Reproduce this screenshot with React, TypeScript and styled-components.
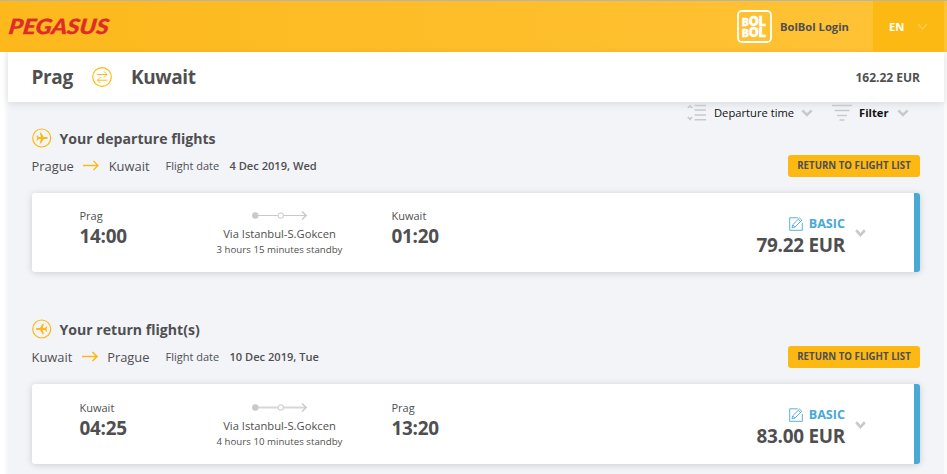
import { FC } from 'react'
import styled, { createGlobalStyle } from 'styled-components'

type Flight = {
  heading: string
  from: string
  to: string
  date: string
  depart: { city: string; time: string }
  arrive: { city: string; time: string }
  standby: string
  price: string
  isReturn?: boolean
}

const flights: Flight[] = [
  {
    heading: 'Your departure flights',
    from: 'Prague',
    to: 'Kuwait',
    date: '4 Dec 2019, Wed',
    depart: { city: 'Prag', time: '14:00' },
    arrive: { city: 'Kuwait', time: '01:20' },
    standby: '3 hours 15 minutes standby',
    price: '79.22 EUR',
  },
  {
    heading: 'Your return flight(s)',
    from: 'Kuwait',
    to: 'Prague',
    date: '10 Dec 2019, Tue',
    depart: { city: 'Kuwait', time: '04:25' },
    arrive: { city: 'Prag', time: '13:20' },
    standby: '4 hours 10 minutes standby',
    price: '83.00 EUR',
    isReturn: true,
  },
]

const Chevron: FC<{ size?: number; color?: string; weight?: number }> = ({
  size = 12,
  color = '#c8c9cb',
  weight = 2.6,
}) => (
  <Icon width={size} height={8} viewBox="0 0 12 8" preserveAspectRatio="none">
    <path d="M1.3 1.3 6 6 10.7 1.3" stroke={color} strokeWidth={weight} />
  </Icon>
)

const PlaneIcon: FC<{ flipped?: boolean }> = ({ flipped }) => (
  <Icon width="20" height="20" viewBox="0 0 20 20">
    <circle cx="9.7" cy="10" r="9" stroke="#fdb913" strokeWidth="1.2" />
    <path
      transform={flipped ? 'matrix(-1 0 0 1 19.7 0)' : undefined}
      fill="#fdb913"
      d="M15.7 10c0-.7-.7-1-1.5-1h-2.5L9.1 4.7H7.8L8.9 9H6.7L5.5 7.6H4.4l.8 2.4-.8 2.4h1.1L6.7 11h2.2l-1.1 4.3h1.3l2.6-4.3h2.5c.8 0 1.5-.3 1.5-1Z"
    />
  </Icon>
)

const App: FC = () => (
  <Page>
    <GlobalStyle />
    <Header>
      <PegasusLogo width="120" height="40">
        <text
          x="1"
          y="27"
          textLength="100"
          lengthAdjust="spacingAndGlyphs"
          transform="matrix(1 0 -.14 1 3.8 0)"
        >
          PEGASUS
        </text>
      </PegasusLogo>
      <Login>
        <BolLogo width="35" height="33">
          <rect x="1" y="1" width="33" height="31" rx="4" />
          <text x="5" y="15.5" textLength="24" lengthAdjust="spacingAndGlyphs">
            <tspan fontSize="10">B</tspan>OL
          </text>
          <text x="5" y="26.5" textLength="24" lengthAdjust="spacingAndGlyphs">
            <tspan fontSize="10">B</tspan>OL
          </text>
        </BolLogo>
        <span>BolBol Login</span>
      </Login>
      <Language>
        <span>EN</span>
        <Chevron size={11} color="#fdca50" weight={1.6} />
      </Language>
    </Header>

    <Body>
      <Summary>
        <SummaryCity>Prag</SummaryCity>
        <Icon width="20" height="20" viewBox="0 0 20 20">
          <circle cx="10" cy="10" r="9.3" stroke="#fdb913" strokeWidth="1.2" />
          <path
            d="M5 7.5h10M12 4.5l3 3-3 3M15.5 13.2h-10M8.5 10.2l-3 3 3 3"
            stroke="#fdb913"
          />
        </Icon>
        <SummaryCity>Kuwait</SummaryCity>
        <Total>162.22 EUR</Total>
      </Summary>

      <Content>
        <Toolbar>
          <Icon width="20" height="18" viewBox="0 0 20 18">
            <path
              d="M7.5 1.5H19M7.5 6H19M7.5 11H19M7.5 15.7H19"
              stroke="#c8c9cb"
              strokeWidth="1.5"
            />
            <path
              d="M.8 4 3 1.8 5.2 4M.8 13 3 15.2 5.2 13"
              stroke="#c8c9cb"
              strokeWidth="1.7"
            />
          </Icon>
          <ToolLabel $width={80}>Departure time</ToolLabel>
          <Chevron />
          <FilterIcon width="20" height="18" viewBox="0 0 20 18">
            <path
              d="M0 1.5h20M2.5 6.5h15M5 11.5h10M7.5 16h5"
              stroke="#c8c9cb"
              strokeWidth="1.5"
            />
          </FilterIcon>
          <ToolLabel $width={31} $bold>
            Filter
          </ToolLabel>
          <Chevron />
        </Toolbar>

        {flights.map((flight) => (
          <Section key={flight.heading}>
            <Heading>
              <PlaneIcon flipped={flight.isReturn} />
              <HeadingText>{flight.heading}</HeadingText>
            </Heading>
            <RouteRow>
              <Route>
                {flight.from}
                <Icon width="18" height="12" viewBox="0 0 18 12">
                  <path
                    d="M1 5.5h15M11.5 1 16 5.5 11.5 10"
                    stroke="#fdb913"
                    strokeWidth={flight.isReturn ? 1.7 : 1.3}
                  />
                </Icon>
                {flight.to}
              </Route>
              <DateLabel>Flight date</DateLabel>
              <DateValue>{flight.date}</DateValue>
              <ReturnButton>RETURN TO FLIGHT LIST</ReturnButton>
            </RouteRow>
            <Card $tall={flight.isReturn}>
              <Stop>
                <City>{flight.depart.city}</City>
                <Time>{flight.depart.time}</Time>
              </Stop>
              <Via>
                <Icon width="56" height="11" viewBox="0 0 56 11">
                  <path
                    d="M3 5.5h23M31 5.5h23"
                    stroke={flight.isReturn ? '#d6d7d9' : '#c8c9cb'}
                    strokeWidth={flight.isReturn ? 1.8 : 1}
                  />
                  <path
                    d="M50 1.5 54.2 5.5 50 9.5"
                    stroke="#c8c9cb"
                    strokeWidth="1.4"
                  />
                  <circle cx="3.3" cy="5.5" r="3.2" fill="#c8c9cb" />
                  <circle
                    cx="28.8"
                    cy="5.5"
                    r="2.6"
                    stroke="#d4d5d7"
                    strokeWidth="1.2"
                  />
                </Icon>
                <ViaText>Via Istanbul-S.Gokcen</ViaText>
                <Standby>{flight.standby}</Standby>
              </Via>
              <Stop>
                <City>{flight.arrive.city}</City>
                <Time>{flight.arrive.time}</Time>
              </Stop>
              <Fare $raised={flight.isReturn}>
                <FareName>
                  <Icon width="14" height="14" viewBox="0 0 14 14">
                    <path
                      d="M8.8.8H.7v12.5h12.6V5.8M3 10.8l.6-2.9L10.5 1l2.3 2.2-6.9 6.9L3 10.8ZM9.2 2.3l2.3 2.3M3.8 8l2 2"
                      stroke="#48a9d6"
                      strokeWidth=".9"
                    />
                  </Icon>
                  BASIC
                </FareName>
                <Price>{flight.price}</Price>
              </Fare>
              <Chevron size={11} weight={2.8} />
            </Card>
          </Section>
        ))}
      </Content>
    </Body>
  </Page>
)

export default App

const GlobalStyle = createGlobalStyle`
  * {
    box-sizing: border-box;
  }

  body {
    margin: 0;
    overflow: hidden;
    background-color: #fafafa;
    color: #4f4f51;
    font-family: 'Open Sans', sans-serif;
  }
`

const Icon = styled.svg`
  display: block;
  flex: none;
  fill: none;
`

const Page = styled.div`
  height: 474px;
  overflow: hidden;
`

const Header = styled.header`
  display: flex;
  align-items: stretch;
  height: 52px;
  padding-right: 3px;
  border-top: 1px solid #b5b5b5;
  background: linear-gradient(90deg, #fdb91c, #ffc337);
`

const PegasusLogo = styled.svg`
  margin: 6px 0 0 7px;
  fill: #e02b2b;
  stroke: #e02b2b;
  stroke-width: 0.3;
  font: italic 900 21px Lato, sans-serif;
`

const Login = styled.div`
  display: flex;
  align-items: center;
  gap: 8px;
  margin-left: auto;
  font-size: 11.2px;
  font-weight: 700;

  span {
    width: 93px;
  }
`

const BolLogo = styled.svg`
  rect {
    fill: none;
    stroke: #fff;
    stroke-width: 1.8;
  }

  text {
    fill: #fff;
    stroke: #fff;
    stroke-width: 0.3;
    font-family: Inter, sans-serif;
    font-size: 12.8px;
    font-weight: 900;
  }
`

const Language = styled.div`
  display: flex;
  align-items: center;
  gap: 12px;
  width: 71px;
  padding-left: 16px;
  background-color: #fdb913;
  color: #fff;
  font-size: 11.3px;
  font-weight: 700;
`

const Body = styled.div`
  height: 422px;
  padding: 0 3px 0 8px;
  background: linear-gradient(90deg, #fff 3px, #f3f4f8 9px 944px, #fafafa 944px);
`

const Summary = styled.div`
  display: flex;
  align-items: center;
  gap: 19px;
  height: 50px;
  padding: 0 24px 0 23.5px;
  background-color: #fff;
  box-shadow: 0 2px 8px rgba(0, 0, 0, 0.1);
`

const SummaryCity = styled.span`
  font-size: 19px;
  font-weight: 700;
  letter-spacing: -0.35px;
`

const Total = styled.span`
  margin-left: auto;
  font-size: 12px;
  font-weight: 700;
`

const Content = styled.main`
  padding: 0 24px;
`

const Toolbar = styled.div`
  display: flex;
  align-items: center;
  height: 22px;
  padding-left: 655px;
  color: #111;
`

const ToolLabel = styled.span<{ $width: number; $bold?: boolean }>`
  width: ${(props) => props.$width}px;
  margin: -2px 7px 0;
  font-size: 11.2px;
  font-weight: ${(props) => (props.$bold ? 700 : 400)};
  white-space: nowrap;
`

const FilterIcon = styled(Icon)`
  margin-left: 19px;
`

const Section = styled.section`
  padding-top: 3px;
  margin-bottom: 43px;
`

const Heading = styled.h2`
  display: flex;
  align-items: center;
  gap: 7.5px;
  height: 22px;
  margin: 0;
`

const HeadingText = styled.span`
  font-size: 14.1px;
  font-weight: 700;
`

const RouteRow = styled.div`
  display: flex;
  align-items: center;
  height: 33px;
  font-size: 11px;
`

const Route = styled.div`
  display: flex;
  align-items: center;
  justify-content: space-between;
  width: 118px;
  margin-left: -0.5px;
  font-size: 12.9px;
`

const DateLabel = styled.span`
  width: 64px;
  margin-left: 16px;
`

const DateValue = styled.span`
  font-size: 11.1px;
  font-weight: 600;
`

const ReturnButton = styled.button`
  width: 132px;
  height: 22px;
  margin-left: auto;
  padding: 0;
  border: 0;
  border-radius: 3px;
  background-color: #fdb913;
  color: #4f4f51;
  font: 700 9.7px 'Open Sans', sans-serif;
  white-space: nowrap;
`

const Card = styled.article<{ $tall?: boolean }>`
  display: flex;
  height: ${(props) => (props.$tall ? 80 : 79)}px;
  margin-top: 11px;
  padding-top: ${(props) => (props.$tall ? 1 : 0)}px;
  padding-left: 47.5px;
  border-right: 6px solid #48a9d6;
  border-radius: 3px;
  background-color: #fff;
  box-shadow: 0 1px 7px rgba(0, 0, 0, 0.16);

  > svg {
    align-self: center;
    margin: ${(props) => (props.$tall ? 0 : 1)}px 48.5px 0 9.5px;
  }
`

const Stop = styled.div`
  width: 107px;
  padding-top: 15px;
`

const City = styled.div`
  font-size: 11px;
  line-height: 16px;
`

const Time = styled.div`
  font-size: 18.9px;
  font-weight: 700;
  line-height: 24px;
  letter-spacing: -0.25px;
`

const Via = styled.div`
  display: flex;
  flex-direction: column;
  align-items: center;
  width: 186px;
  margin-right: 19px;
  padding-top: 17px;
`

const ViaText = styled.div`
  margin-top: 5px;
  font-size: 11.2px;
  line-height: 16px;
`

const Standby = styled.div`
  font-size: 9.7px;
  line-height: 15px;
`

const Fare = styled.div<{ $raised?: boolean }>`
  margin-left: auto;
  padding-top: ${(props) => (props.$raised ? 21 : 22)}px;
  text-align: right;
`

const FareName = styled.div`
  display: flex;
  align-items: center;
  justify-content: flex-end;
  gap: 6px;
  height: 17px;
  color: #48a9d6;
  font-size: 12.6px;
  font-weight: 700;
`

const Price = styled.div`
  font-size: 18.9px;
  font-weight: 700;
  line-height: 26px;
  letter-spacing: -0.25px;
`
